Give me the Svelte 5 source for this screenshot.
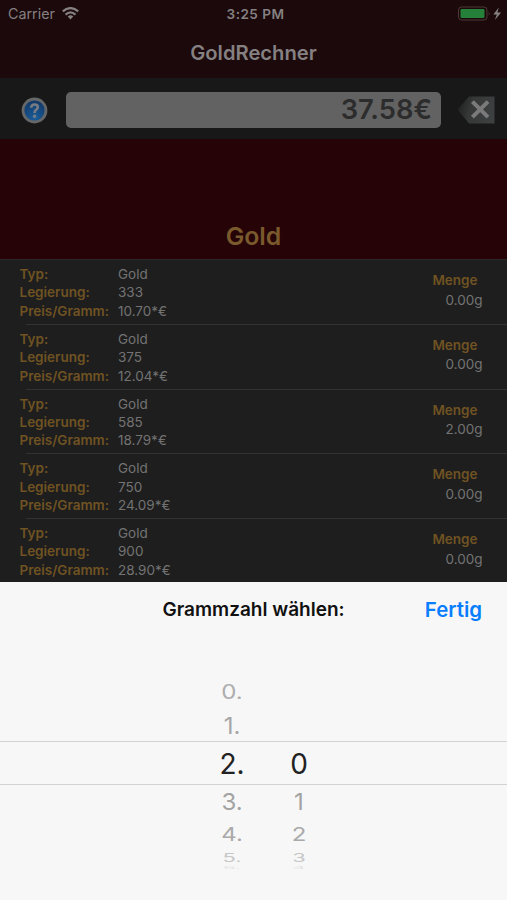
<script>
  let amount = "37.58€";

  const alloys = [
    { type: "Gold", alloy: "333", price: "10.70*€", weight: "0.00g" },
    { type: "Gold", alloy: "375", price: "12.04*€", weight: "0.00g" },
    { type: "Gold", alloy: "585", price: "18.79*€", weight: "2.00g" },
    { type: "Gold", alloy: "750", price: "24.09*€", weight: "0.00g" },
    { type: "Gold", alloy: "900", price: "28.90*€", weight: "0.00g" },
  ];

  // Row height and squash of the picker wheel, top to bottom
  const slots = [
    { height: 34, size: 24, squash: 0.82, color: "#adadad" },
    { height: 33, size: 24, squash: 0.97, color: "#a6a6a6" },
    { height: 43, size: 28, squash: 1.02, color: "#222222" },
    { height: 34, size: 24, squash: 0.98, color: "#a3a3a3" },
    { height: 31, size: 24, squash: 0.8, color: "#a9a9a9" },
    { height: 16, size: 22, squash: 0.54, color: "#c6c6c6" },
  ];

  const wheels = [
    { name: "whole", values: ["0.", "1.", "2.", "3.", "4.", "5."], next: "6." },
    { name: "tenth", values: ["", "", "0", "1", "2", "3"], next: "4" },
  ];
</script>

<div class="app">
  <header>
    <div class="status">
      <div class="carrier">
        <span>Carrier</span>
        <svg width="17" height="13" viewBox="0 0 17 13">
          <g fill="none" stroke="#858081" stroke-width="2.2">
            <path d="M0.8 4.4 Q8.5 -2.2 16.2 4.4" />
            <path d="M3.5 7.6 Q8.5 3.2 13.5 7.6" />
          </g>
          <path d="M5.7 9.5 Q8.5 7.2 11.3 9.5 L8.5 12.4 Z" fill="#858081" />
        </svg>
      </div>
      <span class="time">3:25 PM</span>
      <svg class="battery" width="45" height="16" viewBox="0 0 45 16">
        <rect x="0.5" y="1" width="28.5" height="13" rx="3" fill="none" stroke="#4c3a37" />
        <rect x="2.5" y="3" width="24" height="9" rx="1.2" fill="#258039" />
        <path d="M30.7 5 Q32.4 7.5 30.7 10 Z" fill="#4c3a37" />
        <path d="M40.8 1.5 L35.3 8.5 H38.8 L36.9 14 L43.1 6.5 H39.4 Z" fill="#858081" />
      </svg>
    </div>
    <h1>GoldRechner</h1>
  </header>

  <div class="toolbar">
    <svg class="help" width="27" height="27" viewBox="0 0 27 27">
      <defs>
        <radialGradient id="blue" cx="50%" cy="85%" r="80%">
          <stop offset="0" stop-color="#195e9c" />
          <stop offset="1" stop-color="#123766" />
        </radialGradient>
      </defs>
      <circle cx="13.5" cy="13.5" r="11.5" fill="url(#blue)" stroke="#656769" stroke-width="2.8" />
      <path
        d="M10.2 10.8 Q10.2 7.5 13.6 7.5 Q16.8 7.5 16.8 10.2 Q16.8 11.8 15 12.9 Q13.6 13.8 13.6 15.9"
        fill="none"
        stroke="#777c83"
        stroke-width="2.6"
      />
      <circle cx="13.6" cy="19.3" r="1.7" fill="#777c83" />
    </svg>
    <div class="display">{amount}</div>
    <svg class="clear" width="38" height="28" viewBox="0 0 38 28">
      <defs>
        <linearGradient id="key" x1="0" x2="1" y1="0.4" y2="0.6">
          <stop offset="0" stop-color="#202121" />
          <stop offset="0.35" stop-color="#363838" />
          <stop offset="1" stop-color="#3d4040" />
        </linearGradient>
      </defs>
      <path d="M0.5 13.5 L12 0.5 H37.5 V27.5 H12 Z" fill="url(#key)" />
      <path d="M15.4 5.6 L31 21.2 M31 5.6 L15.4 21.2" stroke="#7a7a7a" stroke-width="4" />
    </svg>
  </div>

  <h2>Gold</h2>

  <div class="list">
    {#each alloys as item}
      <div class="row">
        <dl>
          <dt>Typ:</dt>
          <dd>{item.type}</dd>
          <dt>Legierung:</dt>
          <dd>{item.alloy}</dd>
          <dt>Preis/Gramm:</dt>
          <dd>{item.price}</dd>
        </dl>
        <div class="weight">
          <strong>Menge</strong>
          <span>{item.weight}</span>
        </div>
      </div>
    {/each}
  </div>

  <div class="sheet">
    <div class="sheet-bar">
      <span class="prompt">Grammzahl wählen:</span>
      <button>Fertig</button>
    </div>
    <div class="picker">
      {#each wheels as wheel}
        <div class="wheel {wheel.name}">
          {#each wheel.values as value, i}
            <div class="slot" style:height="{slots[i].height}px">
              <span
                style:font-size="{slots[i].size}px"
                style:color={slots[i].color}
                style:transform="scaleY({slots[i].squash})">{value}</span
              >
            </div>
          {/each}
          <div class="edge"><span>{wheel.next}</span></div>
        </div>
      {/each}
      <div class="selection"></div>
    </div>
  </div>
</div>

<style>
  :global(body) {
    margin: 0;
    background: #1e1e1e;
  }

  .app {
    display: flex;
    flex-direction: column;
    width: 507px;
    height: 900px;
    overflow: hidden;
    background: #1e1e1e;
    font-family: Inter, "Liberation Sans", sans-serif;
    box-sizing: border-box;
  }

  header {
    flex: none;
    height: 78px;
    background: #1b090b;
    color: #858081;
  }

  .status {
    display: grid;
    grid-template-columns: 1fr auto 1fr;
    align-items: center;
    height: 27px;
    padding: 0 4px 0 8px;
    font-size: 14.3px;
  }

  .carrier {
    display: flex;
    align-items: center;
    gap: 7px;
  }

  .time {
    font-weight: 600;
    font-size: 13.6px;
    letter-spacing: 0.45px;
  }

  .battery {
    justify-self: end;
  }

  h1 {
    margin: 0;
    padding-top: 11px;
    font-size: 20.2px;
    line-height: 30px;
    font-weight: 600;
    text-align: center;
  }

  .toolbar {
    display: flex;
    flex: none;
    align-items: center;
    height: 61px;
    padding: 3px 12px 0 21px;
    background: #181818;
    box-sizing: border-box;
  }

  .display {
    flex: 1;
    height: 36px;
    margin: 0 16px 0 18px;
    padding-right: 9px;
    border-radius: 5px;
    background: #626262;
    color: #2c2c2c;
    font-size: 27.3px;
    line-height: 35px;
    font-weight: 600;
    text-align: right;
  }

  h2 {
    flex: none;
    height: 120px;
    margin: 0;
    padding-top: 82px;
    box-sizing: border-box;
    background: #250307;
    color: #7a5a2c;
    font-size: 24.8px;
    line-height: 31px;
    font-weight: 600;
    text-align: center;
  }

  .list {
    flex: none;
    height: 323px;
    overflow: hidden;
    border-top: 1px solid #2b2627;
    box-sizing: border-box;
  }

  .row {
    display: flex;
    justify-content: space-between;
    height: 64.75px;
    padding: 5px 24.5px 0 19.5px;
    box-sizing: border-box;
    background: linear-gradient(#333, #333) 26px 100% / 100% 1px no-repeat;
    font-size: 13.5px;
  }

  .row:last-child {
    background: none;
  }

  dl {
    display: grid;
    grid-template-columns: 98.5px auto;
    grid-auto-rows: 18.4px;
    margin: 0;
    line-height: 18.4px;
  }

  dt,
  .weight strong {
    color: #705322;
    font-weight: 600;
  }

  dd {
    margin: 0;
    color: #737373;
  }

  .weight {
    display: flex;
    flex-direction: column;
    align-items: flex-end;
    padding-top: 6px;
    color: #737373;
    line-height: 19.5px;
  }

  .weight strong {
    margin-right: 5px;
  }

  .sheet {
    flex: 1;
    background: #f7f7f7;
  }

  .sheet-bar {
    display: grid;
    grid-template-columns: 1fr auto 1fr;
    align-items: center;
    height: 54px;
    padding: 0 25px;
  }

  .prompt {
    grid-column: 2;
    color: #111;
    font-size: 19px;
    font-weight: 600;
  }

  button {
    justify-self: end;
    padding: 0;
    border: none;
    background: none;
    color: #087efe;
    font-family: inherit;
    font-size: 20.4px;
    font-weight: 600;
  }

  .picker {
    position: relative;
    display: flex;
    justify-content: center;
    gap: 23px;
    padding: 39px 0 0 24px;
  }

  .wheel {
    width: 44px;
  }

  .slot {
    display: flex;
    align-items: center;
    justify-content: center;
  }

  .slot span {
    line-height: 1;
  }

  .edge {
    display: flex;
    align-items: flex-start;
    justify-content: center;
    height: 5px;
    overflow: hidden;
    color: #e2e2e2;
    font-size: 20px;
    line-height: 20px;
  }

  .edge span {
    transform: scaleY(0.2);
    transform-origin: top;
  }

  .selection {
    position: absolute;
    top: 105px;
    left: 0;
    right: 0;
    height: 42px;
    border-top: 1px solid #d2d2d2;
    border-bottom: 1px solid #d2d2d2;
  }
</style>
